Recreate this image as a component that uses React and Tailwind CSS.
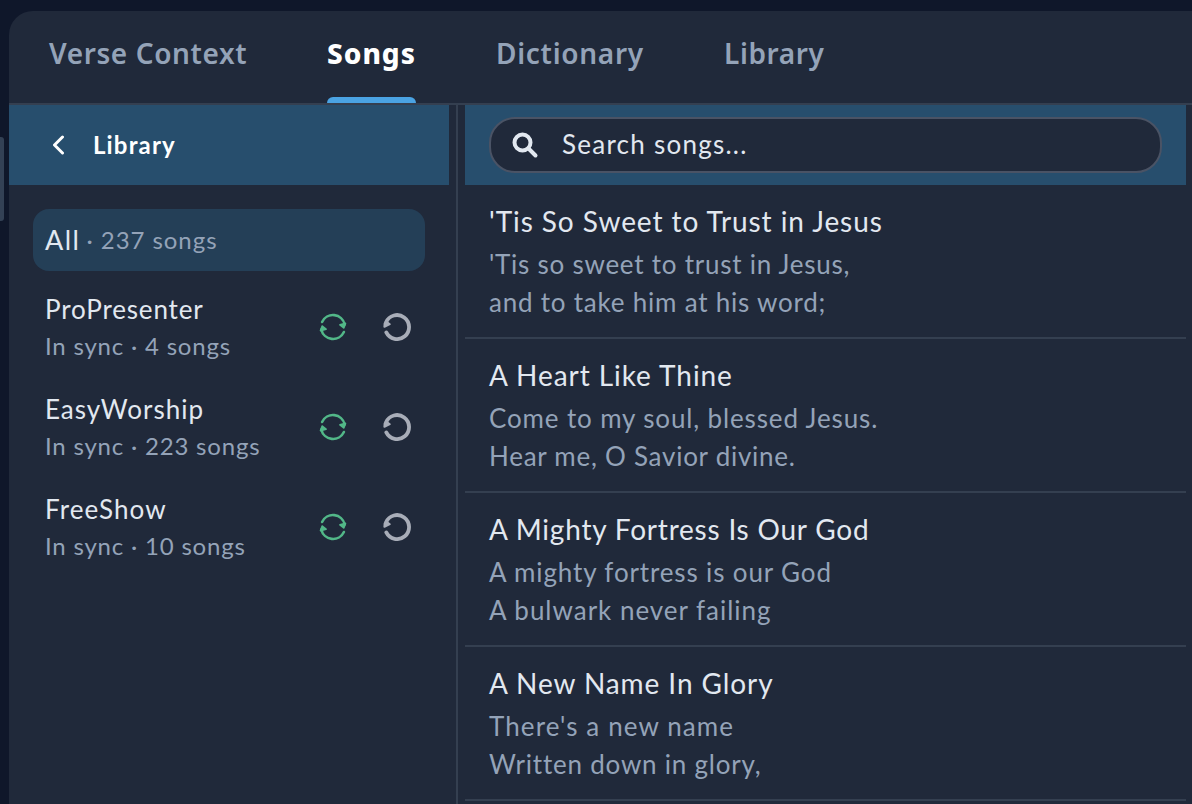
import React from 'react';

const tabs = [
    { name: 'Verse Context', style: 'ml-[40px] w-[198px] tracking-[0.6px]' },
    { name: 'Songs', style: 'ml-[80px] w-[89px] tracking-[1px]', active: true },
    { name: 'Dictionary', style: 'ml-[80px] w-[148px] tracking-[0.7px]' },
    { name: 'Library', style: 'ml-[80px] w-[102px] tracking-[0.6px]' },
];

const sources = [
    { name: 'ProPresenter', count: '4 songs', style: 'tracking-[0.85px]' },
    { name: 'EasyWorship', count: '223 songs', style: 'tracking-[1px]' },
    { name: 'FreeShow', count: '10 songs', style: 'tracking-[1.1px]' },
];

const songs = [
    {
        title: "'Tis So Sweet to Trust in Jesus",
        style: 'tracking-[0.93px]',
        lines: [
            { text: "'Tis so sweet to trust in Jesus,", style: 'tracking-[0.75px]' },
            { text: 'and to take him at his word;', style: 'tracking-[0.78px]' },
        ],
    },
    {
        title: 'A Heart Like Thine',
        style: 'tracking-[0.94px]',
        lines: [
            { text: 'Come to my soul, blessed Jesus.', style: 'tracking-[0.86px]' },
            { text: 'Hear me, O Savior divine.', style: 'tracking-[0.74px]' },
        ],
    },
    {
        title: 'A Mighty Fortress Is Our God',
        style: 'tracking-[0.79px]',
        lines: [
            { text: 'A mighty fortress is our God', style: 'tracking-[0.86px]' },
            { text: 'A bulwark never failing', style: 'tracking-[0.98px]' },
        ],
    },
    {
        title: 'A New Name In Glory',
        style: 'tracking-[0.92px]',
        lines: [
            { text: "There's a new name", style: 'tracking-[1.1px]' },
            { text: 'Written down in glory,', style: 'tracking-[0.78px]' },
        ],
    },
];

const SyncIcon = () => (
    <svg width="28" height="28" viewBox="0 0 28 28" fill="none" stroke="#52b788" strokeWidth="2.6" strokeLinecap="round">
        <path d="M3.1 9A12 12 0 0 1 25.7 11.5M24.9 19A12 12 0 0 1 2.3 16.5" />
        <path d="M21 11.8L26.4 10.4L24.8 14.8ZM7 16.2L1.6 17.6L3.2 13.2Z" fill="#52b788" strokeWidth="1.8" strokeLinejoin="round" />
    </svg>
);

const ReloadIcon = () => (
    <svg width="28" height="28" viewBox="0 0 28 28" fill="none" stroke="#a8adb8" strokeWidth="3.8" strokeLinecap="round">
        <path d="M3 9.4A12 12 0 1 1 3.3 19.4" />
        <path d="M1.6 10.5L1.4 13.8L6.8 11.2L4.5 9.5Z" fill="#a8adb8" strokeWidth="2" strokeLinejoin="round" />
    </svg>
);

const App = () => {
    return (
        <div className="flex h-[804px] w-[1192px] overflow-hidden bg-[#0f172a] pt-[11px] font-['Lato',sans-serif] text-[#e2e8f0]">
            <div className="mt-[126px] mr-[5px] h-[84px] w-1 shrink-0 rounded-r-[3px] bg-[#334155]"></div>
            <div className="flex h-[793px] w-[1183px] flex-col overflow-hidden rounded-tl-[24px] bg-[#20293a]">
                {/* Tabs */}
                <nav className="flex h-[94px] shrink-0 border-b-2 border-[#343f50] font-['Noto_Sans',sans-serif] text-[28px]">
                    {tabs.map((tab) => (
                        <div key={tab.name} className={`relative h-[92px] whitespace-nowrap leading-[84px] ${tab.style} ${tab.active ? 'font-extrabold text-white' : 'font-semibold text-[#94a3b8]'}`}>
                            {tab.name}
                            {tab.active && <span className="absolute bottom-0 left-0 h-[6px] w-full rounded-t-[6px] bg-[#4aa3e3]"></span>}
                        </div>
                    ))}
                </nav>

                <div className="flex min-h-0 flex-1">
                    {/* Sources */}
                    <aside className="w-[440px] shrink-0">
                        <div className="flex h-20 items-center bg-[#274e6d] pl-[43px] text-white">
                            <svg width="13" height="20" viewBox="0 0 13 20" fill="none" stroke="currentColor" strokeWidth="3" strokeLinecap="round" strokeLinejoin="round">
                                <path d="M10.5 2L2.5 10L10.5 18" />
                            </svg>
                            <span className="ml-[28px] text-[24px] font-bold tracking-[1.15px]">Library</span>
                        </div>
                        <div className="mx-6 mt-6 flex h-[62px] items-center rounded-2xl bg-[#243f57] pl-3 text-[27px] tracking-[1.5px]">
                            All
                            <span className="ml-[6px] text-[24px] tracking-[0.95px] text-[#94a3b8]">· 237 songs</span>
                        </div>
                        <div className="mt-[6px]">
                            {sources.map((source) => (
                                <div key={source.name} className="flex h-[100px] items-center pl-9">
                                    <div className="w-[274px]">
                                        <p className={`pt-[2px] text-[26px] leading-[35px] ${source.style}`}>{source.name}</p>
                                        <p className="text-[24px] leading-[37px] tracking-[0.8px] text-[#94a3b8]">In sync · {source.count}</p>
                                    </div>
                                    <SyncIcon />
                                    <div className="ml-9"><ReloadIcon /></div>
                                </div>
                            ))}
                        </div>
                    </aside>

                    <div className="mr-[7px] ml-[7px] w-[2px] shrink-0 bg-[#343f50]"></div>

                    {/* Songs */}
                    <main className="w-[721px] shrink-0">
                        <div className="h-20 bg-[#274e6d] px-6 pt-3">
                            <div className="flex h-[56px] items-center rounded-[26px] border-2 border-[#4a5365] bg-[#20293a] pl-5">
                                <svg width="28" height="28" viewBox="0 0 28 28" fill="none" stroke="#e2e8f0" strokeWidth="4" strokeLinecap="round">
                                    <circle cx="11.5" cy="11.5" r="8" />
                                    <path d="M17.5 17.5L24.5 24.5" />
                                </svg>
                                <span className="mb-[2px] ml-[23px] text-[26px] tracking-[1.25px]">Search songs...</span>
                            </div>
                        </div>
                        {songs.map((song) => (
                            <div key={song.title} className="h-[154px] border-b-2 border-[#343f50] px-6 pt-[14px]">
                                <h2 className={`pb-[2px] text-[28px] leading-[44px] ${song.style}`}>{song.title}</h2>
                                {song.lines.map((line) => (
                                    <p key={line.text} className={`text-[26px] leading-[38px] text-[#94a3b8] ${line.style}`}>{line.text}</p>
                                ))}
                            </div>
                        ))}
                    </main>
                </div>
            </div>
        </div>
    );
};

export default App;
